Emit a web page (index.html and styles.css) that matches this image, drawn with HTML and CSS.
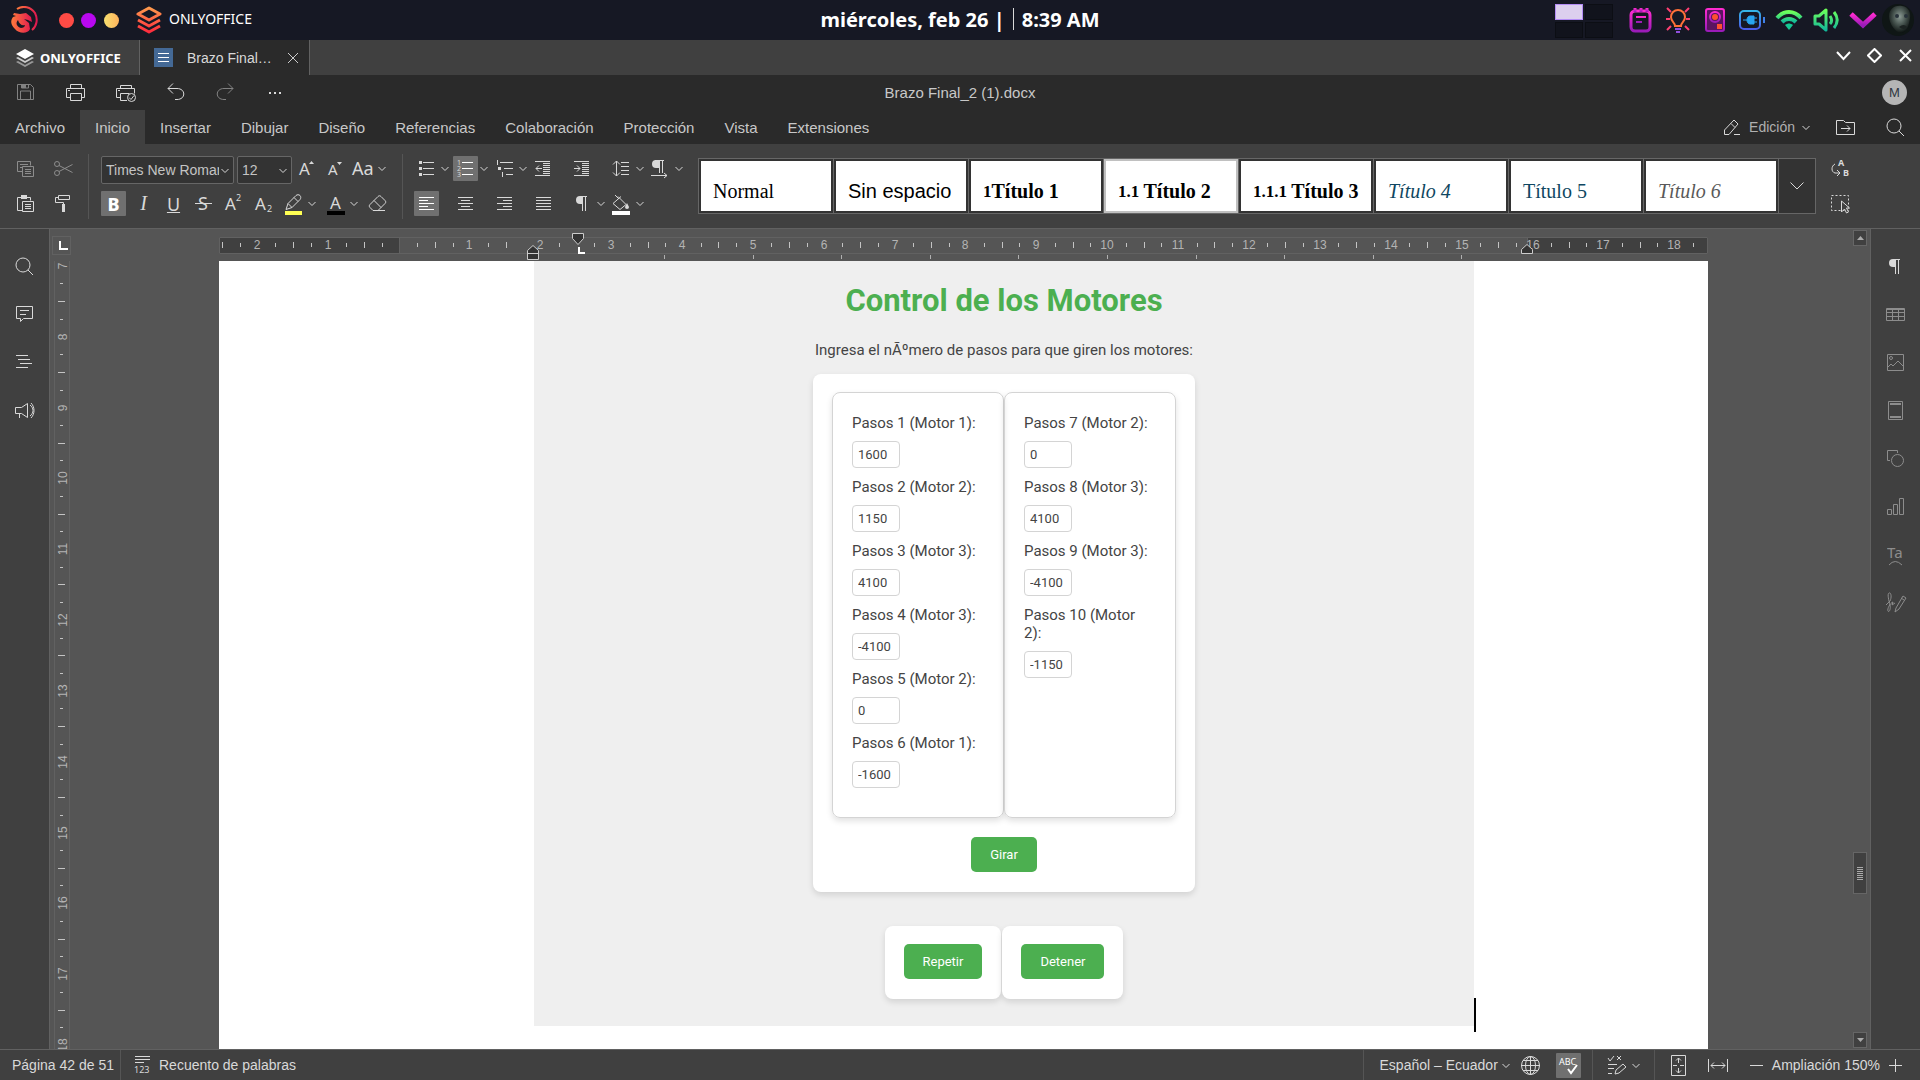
FILE: index.html
```html
<!DOCTYPE html>
<html lang="es">
<head>
<meta charset="utf-8">
<title>Brazo Final_2 (1).docx - ONLYOFFICE</title>
<link rel="stylesheet" href="styles.css">
</head>
<body>
<svg class="paints" aria-hidden="true">
  <defs>
    <linearGradient id="g-fire" x1="0" y1="0" x2="0" y2="1"><stop offset="0" stop-color="#ff9a4d"/><stop offset="1" stop-color="#ff2b3d"/></linearGradient>
    <linearGradient id="g-dragon" x1="0" y1="0" x2="1" y2="0"><stop offset="0" stop-color="#ff7a3c"/><stop offset="1" stop-color="#e0174f"/></linearGradient>
    <linearGradient id="g-pink" x1="0" y1="0" x2="0" y2="1"><stop offset="0" stop-color="#ff2bd0"/><stop offset="1" stop-color="#9a1bb8"/></linearGradient>
    <linearGradient id="g-blue" x1="0" y1="0" x2="0" y2="1"><stop offset="0" stop-color="#35b6e8"/><stop offset="1" stop-color="#4a5be8"/></linearGradient>
    <linearGradient id="g-green" x1="0" y1="0" x2="0" y2="1"><stop offset="0" stop-color="#6dff5a"/><stop offset="1" stop-color="#12b89a"/></linearGradient>
    <radialGradient id="g-face" cx=".5" cy=".4" r=".6"><stop offset="0" stop-color="#8b9a94"/><stop offset=".5" stop-color="#47544f"/><stop offset="1" stop-color="#0c1211"/></radialGradient>
  </defs>
</svg>
<svg class="sprite" aria-hidden="true">
  <symbol id="chev" viewBox="0 0 12 25"><path d="M2.500 11l3.500 3.500L9.500 11"/></symbol>
  <symbol id="copy" viewBox="0 0 25 25"><path d="M9 15.500H4.500v-10h13v4M7 8.500h8M7 11.500h2M9.500 10.500h11v10h-11zM12 13.500h6M12 15.500h6M12 17.500h6"/></symbol>
  <symbol id="cut" viewBox="0 0 25 25"><circle cx="6" cy="8" r="2.500"/><circle cx="6" cy="17" r="2.500"/><path d="M8 9.500l13.500 7M8 15.500l13.500-7"/></symbol>
  <symbol id="paste" viewBox="0 0 25 25"><path d="M9 19.500H4.500v-13h13v3M9.500 10.500h11v10h-11zM12 13.500h6M12 15.500h6M12 17.500h6"/><path class="solid" d="M8 4h6v4H8z"/></symbol>
  <symbol id="brush" viewBox="0 0 25 25"><path d="M7.500 4.500h11v4h-11zM7.500 6.500h-3v5h8v3"/><path class="solid" d="M11 13h3v8h-3z"/></symbol>
  <symbol id="up-a" viewBox="0 0 25 25"><text x="4" y="19" font-size="17">A</text><path class="solid" d="M14 8l2.500-3L19 8z"/></symbol>
  <symbol id="down-a" viewBox="0 0 25 25"><text x="5" y="19" font-size="15">A</text><path class="solid" d="M14 6l2.500 3L19 6z"/></symbol>
  <symbol id="case" viewBox="0 0 25 25"><text x="1" y="19" font-size="18">Aa</text></symbol>
  <symbol id="sup" viewBox="0 0 25 25"><text x="4" y="19" font-size="17">A</text><text x="15" y="10" font-size="9">2</text></symbol>
  <symbol id="sub" viewBox="0 0 25 25"><text x="4" y="19" font-size="17">A</text><text x="16" y="21" font-size="9">2</text></symbol>
  <symbol id="strike" viewBox="0 0 25 25"><text x="7" y="19" font-size="18">S</text><path d="M4 12.500h17"/></symbol>
  <symbol id="marker" viewBox="0 0 25 25"><path d="M5 18.500l2-6 8-8c1-1 3-1 4 0s1 3 0 4l-8 8zM7 12.500l4 4M13 6.500l4 4"/><path fill="#ffff54" stroke="none" d="M4 20h17v4H4z"/></symbol>
  <symbol id="color-a" viewBox="0 0 25 25"><text x="7" y="18" font-size="17">A</text><path fill="#000" stroke="none" d="M4 20h18v4H4z"/></symbol>
  <symbol id="eraser" viewBox="0 0 25 25"><path d="M8 19.500l-3-3c-1-1-1-2 0-3l8-8c1-1 2-1 3 0l4 4c1 1 1 2 0 3l-7 7zM9 9.500l7 7M13 19.500h7"/></symbol>
  <symbol id="bullets" viewBox="0 0 25 25"><path d="M9 6.500h11M9 12.500h11M9 18.500h11"/><path class="solid" d="M5 5h3v3H5zM5 11h3v3H5zM5 17h3v3H5z"/></symbol>
  <symbol id="numbers" viewBox="0 0 25 25"><path d="M9 6.500h11M9 12.500h11M9 18.500h11"/><text x="4" y="9" font-size="7">1</text><text x="4" y="15" font-size="7">2</text><text x="4" y="21" font-size="7">3</text></symbol>
  <symbol id="levels" viewBox="0 0 25 25"><path d="M8 6.500h13M12 12.500h9M14 18.500h7M5.500 4v5M10.500 16v5"/><path class="solid" d="M6 11h3v3H6z"/></symbol>
  <symbol id="outdent" viewBox="0 0 25 25"><path d="M4 5.500h15M12 7.500h7M12 9.500h7M12 11.500h7M12 13.500h7M12 15.500h7M12 17.500h7M4 19.500h15M11 12.500H5M8 9.500l-3 3 3 3"/></symbol>
  <symbol id="indent" viewBox="0 0 25 25"><path d="M4 5.500h15M12 7.500h7M12 9.500h7M12 11.500h7M12 13.500h7M12 15.500h7M12 17.500h7M4 19.500h15M4 12.500h6M7 9.500l3 3-3 3"/></symbol>
  <symbol id="spacing" viewBox="0 0 25 25"><path d="M12 6.500h8M12 10.500h8M12 14.500h8M12 18.500h8M7.500 5v15M4 8.500l3.500-3.500L11 8.500M4 16.500l3.500 3.500 3.500-3.500"/></symbol>
  <symbol id="pdir" viewBox="0 0 25 25"><path d="M11.500 4v13M14.500 4v13M7 4.500h9M3 19.500h16M16 17l3 2.500-3 2.500"/><path class="solid" d="M11 4H8a4 4 0 0 0 0 8h3z"/></symbol>
  <symbol id="pilcrow" viewBox="0 0 25 25"><path d="M12.500 5v15M15.500 5v15M10 5.500h7"/><path class="solid" d="M12 5h-2a4 4 0 0 0 0 8h2z"/></symbol>
  <symbol id="bucket" viewBox="0 0 25 25"><path d="M9 5.500l8 8-6 5-7-6 8-7M6 4l4 4"/><path class="solid" d="M18 12l2 4a2 2 0 1 1-4 0z"/><path fill="#fff" stroke="none" d="M3 20h18v4H3z"/></symbol>
  <symbol id="al" viewBox="0 0 25 25"><path d="M5 6.500h15M5 9.500h9M5 12.500h15M5 15.500h9M5 18.500h15"/></symbol>
  <symbol id="ac" viewBox="0 0 25 25"><path d="M5 6.500h15M8 9.500h9M5 12.500h15M8 15.500h9M5 18.500h15"/></symbol>
  <symbol id="ar" viewBox="0 0 25 25"><path d="M5 6.500h15M11 9.500h9M5 12.500h15M11 15.500h9M5 18.500h15"/></symbol>
  <symbol id="aj" viewBox="0 0 25 25"><path d="M5 6.500h15M5 9.500h15M5 12.500h15M5 15.500h15M5 18.500h15"/></symbol>
  <symbol id="replace" viewBox="0 0 25 25"><path d="M7 8c-4 2-4 8 0 9h5M9 14l3 3-3 3"/><text class="heavy" x="10" y="10" font-size="9">A</text><text class="heavy" x="15" y="20" font-size="9">B</text></symbol>
  <symbol id="select" viewBox="0 0 25 25"><path stroke-dasharray="2 2" d="M3.500 4.500h17v15h-17z"/><path fill="#404040" d="M13.500 10v11l3-3 2 4 2-1-2-4h3z"/></symbol>
  <symbol id="save" viewBox="0 0 25 25"><path d="M4.500 4.500h13l3 3v12h-16zM7.500 19v-8h10v8M8.500 4v4h7V4"/><path class="solid" d="M9 4h4v4H9z"/></symbol>
  <symbol id="print" viewBox="0 0 25 25"><path d="M7.500 8V4.500h11V8M7 17.500H3.500v-9h18v9H18M7.500 13.500h11v7h-11zM5 10.500h2"/></symbol>
  <symbol id="qprint" viewBox="0 0 25 25"><path d="M7.500 8V5.500h11V8M7 17.500H3.500v-9h18v5M14 20.500H7.500v-7h9M5 10.500h2"/><circle cx="18.500" cy="17.500" r="4"/><path d="M16 17.500l2 2 3-4"/></symbol>
  <symbol id="undo" viewBox="0 0 25 25"><path d="M10 3.500l-5 5 5 5M5 8.500h9c9 0 9 11 0 11h-2"/></symbol>
  <symbol id="redo" viewBox="0 0 25 25"><path d="M15 3.500l5 5-5 5M20 8.500h-9c-9 0-9 11 0 11h2"/></symbol>
  <symbol id="dots" viewBox="0 0 25 25"><path class="solid" d="M6 12h2v2H6zM11 12h2v2h-2zM16 12h2v2h-2z"/></symbol>
  <symbol id="pencil" viewBox="0 0 25 25"><path d="M5.500 15l9.500-10 4 4-9 10.500H5.500zM12 8.500l4 4M15 19.500h6"/></symbol>
  <symbol id="folder" viewBox="0 0 25 25"><path d="M3.500 19.500v-14h7l2 2h9v12zM8 13.500h9M14 10.500l3 3-3 3"/></symbol>
  <symbol id="search" viewBox="0 0 25 25"><circle cx="11" cy="11" r="7"/><path d="M16 16l5 5"/></symbol>
  <symbol id="comment" viewBox="0 0 25 25"><path d="M4.500 4.500h16v12h-9l-3 3v-3h-4zM8 8.500h9M8 12.500h6"/></symbol>
  <symbol id="outline" viewBox="0 0 25 25"><path d="M4 5.500h12M6 9.500h12M8 13.500h12M4 17.500h12"/></symbol>
  <symbol id="horn" viewBox="0 0 25 25"><path d="M3.500 9.500h6l6-4v14l-6-4h-6zM7.500 16v4M18 7c4 3 4 8 0 11M19 5c4 4 4 11 0 15"/></symbol>
  <symbol id="table" viewBox="0 0 25 25"><path d="M3.500 6.500h18v12h-18zM3 7.500h18M3 10.500h18M3 14.500h18M9.500 6v12M15.500 6v12"/></symbol>
  <symbol id="image" viewBox="0 0 25 25"><path d="M4.500 4.500h16v16h-16zM5 17l3-3 2 2 5-5 5 5"/><circle cx="8" cy="8" r="1.500"/></symbol>
  <symbol id="header" viewBox="0 0 25 25"><path d="M5.500 3.500h14v18h-14zM7 5.500h11M7 6.500h11M7 18.500h11M7 19.500h11"/></symbol>
  <symbol id="shape" viewBox="0 0 25 25"><path d="M7 14.500H4.500v-10h10V7"/><circle cx="14.500" cy="14.500" r="6"/></symbol>
  <symbol id="chart" viewBox="0 0 25 25"><path d="M4.500 15.500h4v5h-4zM10.500 10.500h4v10h-4zM16.500 4.500h4v16h-4z"/></symbol>
  <symbol id="textart" viewBox="0 0 25 25"><text x="4" y="16" font-size="15">Ta</text><path d="M6 23q6-7 13 0"/></symbol>
  <symbol id="sign" viewBox="0 0 25 25"><path d="M3 15l4-4c2-4 1-9-1-8s0 8 1 12-1 8-2 6 2-8 5-9l-1 3 3-2M12 22l1-4 7-12 3 2-7 11zM18 8l3 2"/></symbol>
  <symbol id="globe" viewBox="0 0 25 25"><circle cx="12.500" cy="12.500" r="9"/><ellipse cx="12.500" cy="12.500" rx="5" ry="9"/><path d="M12.500 3v19M3 12.500h19M5 7.500h15M5 17.500h15"/></symbol>
  <symbol id="spell" viewBox="0 0 25 25"><text class="bright" x="3" y="12" font-size="9">ABC</text><path class="thick" d="M12 16l3 4 6-8"/></symbol>
  <symbol id="review" viewBox="0 0 25 25"><path d="M3 5l2 3 4-5M12 3l4 4M16 3l-4 4M3 11.500h9M3 15.500h6M3 20.500h4M10 21l1-4 7-6 3 3-7 6z"/></symbol>
  <symbol id="fitpage" viewBox="0 0 25 25"><path d="M5.500 2.500h14v20h-14zM12.500 5v5M10 7.500l2.500-2.500L15 7.500M12.500 20v-5M10 17.500l2.500 2.500 2.500-2.500M7 12.500h4M14 12.500h4"/></symbol>
  <symbol id="fitwidth" viewBox="0 0 25 25"><path d="M3.500 6v13M22.500 6v13M6 12.500h14M9 9.500l-3 3 3 3M17 9.500l3 3-3 3"/></symbol>
  <symbol id="minus" viewBox="0 0 25 25"><path d="M6 12.500h13"/></symbol>
  <symbol id="plus" viewBox="0 0 25 25"><path d="M6 12.500h13M12.500 6v13"/></symbol>
  <symbol id="count" viewBox="0 0 25 25"><path d="M5 3.500h15M5 6.500h15M5 9.500h9"/><text x="4" y="20" font-size="9">123</text></symbol>
</svg>

<header class="desk">
  <div class="desk-left">
    <svg class="dragon" viewBox="0 0 28 28"><path d="M7 3C13-1 21 1 25 7c3 6 2 13-3 17" fill="none" stroke="url(#g-dragon)" stroke-width="2"/><path fill="url(#g-dragon)" d="M4 7l6 1 6-1 5 4 1 5-4-2-4-1 5 4 1 6c-2 5-11 5-15 0-4-4-5-8-2-12l3-1-3-1zM8 14c-3 3-1 7 3 8 2 0 4-1 4-3-3 1-6-1-7-5z" fill-rule="evenodd"/></svg>
    <span class="dot dot-red"></span><span class="dot dot-violet"></span><span class="dot dot-gold"></span>
    <svg class="oo-color" viewBox="0 0 26 28"><path fill="none" stroke="url(#g-fire)" stroke-width="3" stroke-linejoin="round" d="M2 8l11-6 11 6-11 6zM2 14l11 6 11-6M2 20l11 6 11-6"/></svg>
    <span class="app-name">ONLYOFFICE</span>
  </div>
  <div class="clock"><span>miércoles, feb 26 |</span><i></i><span>8:39 AM</span></div>
  <div class="desk-right">
    <div class="pager"><span class="on"></span><span></span><span></span><span></span></div>
    <svg class="tray" viewBox="0 0 28 28" fill="none" stroke="url(#g-pink)" stroke-width="3"><rect x="4" y="5" width="19" height="20" rx="4"/><path d="M8 2v4M14 2v4M20 2v4"/><path stroke-width="2" d="M9 11h10M9 16h6"/></svg>
    <svg class="tray" viewBox="0 0 28 28" fill="none" stroke="#ff3f73" stroke-width="2"><path d="M3 2l4 4M25 2l-4 4M2 13h4M22 13h4M3 24l4-4M25 24l-4-4"/><path stroke="#ff7038" d="M11 20c0-4-4-4-4-9a7 7 0 0 1 14 0c0 5-4 5-4 9z"/><path stroke="#9050e0" d="M11 23h6M12 26h4"/></svg>
    <svg class="tray" viewBox="0 0 28 28" fill="#5a1460" stroke="url(#g-pink)" stroke-width="2"><rect x="5" y="3" width="18" height="22" rx="2"/><circle cx="14" cy="11" r="5"/><circle cx="14" cy="11" r="2" fill="#ff5030" stroke="#ff5030"/><path fill="#ff5030" stroke="none" d="M16 18h5v5h-5z"/><path d="M8 20h3"/></svg>
    <svg class="tray" viewBox="0 0 28 28" fill="none" stroke="url(#g-blue)" stroke-width="2"><rect x="2" y="5" width="20" height="18" rx="4"/><path stroke="#3f7fe8" d="M26 11v6"/><path fill="#28a5f0" stroke="#28a5f0" stroke-width="1" d="M12 10h4v8h-4c-2 0-3-2-3-4s1-4 3-4zM5 14h4M16 12h3M16 16h3"/></svg>
    <svg class="tray" viewBox="0 0 28 28" fill="none" stroke="url(#g-green)" stroke-width="4"><path d="M2 12c7-8 17-8 24 0M7 16c4-4 10-4 14 0"/><path fill="#16c794" stroke="none" d="M10 19c3-2 5-2 8 0l-4 5z"/></svg>
    <svg class="tray" viewBox="0 0 28 28" fill="none" stroke="url(#g-green)" stroke-width="3" stroke-linejoin="round"><path d="M3 10h4l7-6v20l-7-6H3zM18 10c2 3 2 6 0 8M22 6c4 5 4 11 0 16"/></svg>
    <svg class="tray" viewBox="0 0 28 28" fill="none" stroke="url(#g-pink)" stroke-width="5"><path d="M2 8l12 11L26 8"/></svg>
    <svg class="face" viewBox="0 0 32 32"><circle cx="16" cy="16" r="16" fill="#0f1615"/><path fill="url(#g-face)" d="M7 12C7 4 14 1 20 2c7 1 9 7 8 12-1 7-3 15-9 15-5 0-12-9-12-17z"/><circle cx="15" cy="12" r="2" fill="#27323a"/><circle cx="24" cy="12" r="2" fill="#27323a"/><path fill="#1b2221" d="M17 23q5-4 8 0-3 4-8 0z"/></svg>
  </div>
</header>

<nav class="tabstrip">
  <button class="home-tab"><svg viewBox="0 0 20 20"><path fill="#fff" d="M1 6l9-5 9 5-9 5z"/><path fill="#ccc" d="M1 10l2-1 7 4 7-4 2 1-9 5z"/><path fill="#999" d="M1 14l2-1 7 4 7-4 2 1-9 5z"/></svg>ONLYOFFICE</button>
  <div class="doc-tab"><svg class="doc-ico" viewBox="0 0 19 19"><path fill="#446995" d="M0 0h19v19H0z"/><path stroke="#fff" d="M4 5.500h11M4 9.500h11M4 13.500h11"/></svg><span>Brazo Final…</span><button aria-label="Cerrar pestaña"><svg viewBox="0 0 12 12"><path d="M1 1l10 10M11 1L1 11"/></svg></button></div>
  <div class="win">
    <button aria-label="Minimizar"><svg viewBox="0 0 15 15"><path d="M1 4l6.500 7L14 4"/></svg></button>
    <button aria-label="Maximizar"><svg viewBox="0 0 15 15"><path d="M7.500 1L14 7.500 7.500 14 1 7.500z"/></svg></button>
    <button aria-label="Cerrar"><svg viewBox="0 0 15 15"><path d="M2 2l11 11M13 2L2 13"/></svg></button>
  </div>
</nav>

<div class="titlebar">
  <div class="quick">
    <button class="off" aria-label="Guardar"><svg class="ic"><use href="#save"/></svg></button>
    <button aria-label="Imprimir"><svg class="ic"><use href="#print"/></svg></button>
    <button aria-label="Impresión rápida"><svg class="ic"><use href="#qprint"/></svg></button>
    <button aria-label="Deshacer"><svg class="ic"><use href="#undo"/></svg></button>
    <button class="off" aria-label="Rehacer"><svg class="ic"><use href="#redo"/></svg></button>
    <button aria-label="Más"><svg class="ic"><use href="#dots"/></svg></button>
  </div>
  <div class="doc-name">Brazo Final_2 (1).docx</div>
  <div class="user"><span>M</span></div>
</div>

<nav class="menu">
  <button>Archivo</button><button class="active">Inicio</button><button>Insertar</button><button>Dibujar</button><button>Diseño</button><button>Referencias</button><button>Colaboración</button><button>Protección</button><button>Vista</button><button>Extensiones</button>
  <div class="menu-right">
    <button class="mode"><svg class="ic"><use href="#pencil"/></svg><span>Edición</span><svg class="cv"><use href="#chev"/></svg></button>
    <button aria-label="Abrir ubicación"><svg class="ic"><use href="#folder"/></svg></button>
    <button aria-label="Buscar"><svg class="ic"><use href="#search"/></svg></button>
  </div>
</nav>

<section class="ribbon">
  <div class="group clip">
    <div class="row"><button class="off" aria-label="Copiar"><svg class="ic"><use href="#copy"/></svg></button><button class="off" aria-label="Cortar"><svg class="ic"><use href="#cut"/></svg></button></div>
    <div class="row"><button aria-label="Pegar"><svg class="ic"><use href="#paste"/></svg></button><button aria-label="Copiar estilo"><svg class="ic"><use href="#brush"/></svg></button></div>
  </div>
  <div class="sep"></div>
  <div class="group font">
    <div class="row">
      <div class="combo name"><select aria-label="Fuente"><option>Times New Roman</option></select><svg class="cv"><use href="#chev"/></svg></div>
      <div class="combo size"><select aria-label="Tamaño de fuente"><option>12</option></select><svg class="cv"><use href="#chev"/></svg></div>
      <button aria-label="Aumentar tamaño"><svg class="ic"><use href="#up-a"/></svg></button>
      <button aria-label="Reducir tamaño"><svg class="ic"><use href="#down-a"/></svg></button>
      <button aria-label="Cambiar mayúsculas"><svg class="ic"><use href="#case"/></svg><svg class="cv"><use href="#chev"/></svg></button>
    </div>
    <div class="row wide">
      <button class="pressed bold">B</button>
      <button class="ital">I</button>
      <button class="under">U</button>
      <button aria-label="Tachado"><svg class="ic"><use href="#strike"/></svg></button>
      <button aria-label="Superíndice"><svg class="ic"><use href="#sup"/></svg></button>
      <button aria-label="Subíndice"><svg class="ic"><use href="#sub"/></svg></button>
      <button aria-label="Resaltado"><svg class="ic"><use href="#marker"/></svg><svg class="cv"><use href="#chev"/></svg></button>
      <button aria-label="Color de fuente"><svg class="ic"><use href="#color-a"/></svg><svg class="cv"><use href="#chev"/></svg></button>
      <button aria-label="Borrar estilo"><svg class="ic"><use href="#eraser"/></svg></button>
    </div>
  </div>
  <div class="sep"></div>
  <div class="group para">
    <button aria-label="Viñetas"><svg class="ic"><use href="#bullets"/></svg><svg class="cv"><use href="#chev"/></svg></button>
    <button aria-label="Numeración"><svg class="ic pressed"><use href="#numbers"/></svg><svg class="cv"><use href="#chev"/></svg></button>
    <button aria-label="Lista multinivel"><svg class="ic"><use href="#levels"/></svg><svg class="cv"><use href="#chev"/></svg></button>
    <button aria-label="Reducir sangría"><svg class="ic"><use href="#outdent"/></svg></button>
    <button aria-label="Aumentar sangría"><svg class="ic"><use href="#indent"/></svg></button>
    <button aria-label="Interlineado"><svg class="ic"><use href="#spacing"/></svg><svg class="cv"><use href="#chev"/></svg></button>
    <button aria-label="Dirección del texto"><svg class="ic"><use href="#pdir"/></svg><svg class="cv"><use href="#chev"/></svg></button>
    <button aria-label="Alinear a la izquierda"><svg class="ic pressed"><use href="#al"/></svg></button>
    <button aria-label="Centrar"><svg class="ic"><use href="#ac"/></svg></button>
    <button aria-label="Alinear a la derecha"><svg class="ic"><use href="#ar"/></svg></button>
    <button aria-label="Justificar"><svg class="ic"><use href="#aj"/></svg></button>
    <button aria-label="Caracteres no imprimibles"><svg class="ic"><use href="#pilcrow"/></svg><svg class="cv"><use href="#chev"/></svg></button>
    <button aria-label="Sombreado"><svg class="ic"><use href="#bucket"/></svg><svg class="cv"><use href="#chev"/></svg></button>
  </div>
  <div class="gallery">
    <button class="st serif">Normal</button>
    <button class="st">Sin espacio</button>
    <button class="st serif strong"><small>1</small>Título 1</button>
    <button class="st serif strong chosen"><small>1.1 </small>Título 2</button>
    <button class="st serif strong"><small>1.1.1 </small>Título 3</button>
    <button class="st serif slant teal">Título 4</button>
    <button class="st serif teal">Título 5</button>
    <button class="st serif slant gray">Título 6</button>
    <button class="more" aria-label="Más estilos"><svg viewBox="0 0 16 10"><path d="M1.500 1.500L8 8l6.500-6.500"/></svg></button>
  </div>
  <div class="group tail">
    <button aria-label="Reemplazar"><svg class="ic"><use href="#replace"/></svg></button>
    <button aria-label="Seleccionar"><svg class="ic"><use href="#select"/></svg></button>
  </div>
</section>

<main class="work">
  <aside class="side left">
    <button aria-label="Buscar"><svg class="ic"><use href="#search"/></svg></button>
    <button aria-label="Comentarios"><svg class="ic"><use href="#comment"/></svg></button>
    <button aria-label="Títulos"><svg class="ic"><use href="#outline"/></svg></button>
    <button aria-label="Sugerencias"><svg class="ic"><use href="#horn"/></svg></button>
  </aside>
  <div class="vcol">
    <button class="tabstop" aria-label="Tabulación"></button>
    <svg class="vruler" width="17" height="788" viewBox="0 0 17 788">
      <path stroke="#616161" d="M.5 0v788M15.500 0v788"/>
      <path stroke="#c4c4c4" d="M4 40.500h7M4 111.500h7M4 182.500h7M4 253.500h7M4 323.500h7M4 394.500h7M4 465.500h7M4 536.500h7M4 607.500h7M4 678.500h7M4 749.500h7M6 22.500h3M6 58.500h3M6 93.500h3M6 129.500h3M6 164.500h3M6 199.500h3M6 235.500h3M6 270.500h3M6 306.500h3M6 341.500h3M6 377.500h3M6 412.500h3M6 447.500h3M6 483.500h3M6 518.500h3M6 554.500h3M6 589.500h3M6 624.500h3M6 660.500h3M6 695.500h3M6 731.500h3M6 766.500h3"/>
      <g class="nums">
        <text transform="translate(13 5) rotate(-90)">7</text><text transform="translate(13 76) rotate(-90)">8</text><text transform="translate(13 147) rotate(-90)">9</text><text transform="translate(13 217) rotate(-90)">10</text><text transform="translate(13 288) rotate(-90)">11</text><text transform="translate(13 359) rotate(-90)">12</text><text transform="translate(13 430) rotate(-90)">13</text><text transform="translate(13 501) rotate(-90)">14</text><text transform="translate(13 572) rotate(-90)">15</text><text transform="translate(13 642) rotate(-90)">16</text><text transform="translate(13 713) rotate(-90)">17</text><text transform="translate(13 784) rotate(-90)">18</text>
      </g>
    </svg>
  </div>
  <div class="canvas">
    <svg class="hruler" width="1489" height="32" viewBox="0 0 1489 32">
      <path fill="#404040" d="M0 8h181v17H0zM1309 8h180v17h-180z"/>
      <path fill="none" stroke="#616161" d="M.5 8.500h1488v16H.5zM180.500 8v17M1308.500 8v17"/>
      <path stroke="#c4c4c4" d="M3.500 13v6M74.500 13v6M145.500 13v6M216.500 13v6M287.500 13v6M429.500 13v6M499.500 13v6M570.500 13v6M641.500 13v6M712.500 13v6M783.500 13v6M854.500 13v6M925.500 13v6M995.500 13v6M1066.500 13v6M1137.500 13v6M1208.500 13v6M1279.500 13v6M1350.500 13v6M1421.500 13v6M21.500 14v4M56.500 14v4M92.500 14v4M127.500 14v4M163.500 14v4M198.500 14v4M234.500 14v4M269.500 14v4M340.500 14v4M375.500 14v4M411.500 14v4M446.500 14v4M482.500 14v4M517.500 14v4M552.500 14v4M588.500 14v4M623.500 14v4M659.500 14v4M694.500 14v4M730.500 14v4M765.500 14v4M800.500 14v4M836.500 14v4M871.500 14v4M907.500 14v4M942.500 14v4M978.500 14v4M1013.500 14v4M1048.500 14v4M1084.500 14v4M1119.500 14v4M1155.500 14v4M1190.500 14v4M1226.500 14v4M1261.500 14v4M1297.500 14v4M1332.500 14v4M1367.500 14v4M1403.500 14v4M1438.500 14v4M1474.500 14v4"/>
      <path stroke="#b0b0b0" d="M445.500 26v4M534.500 26v4M622.500 26v4M711.500 26v4M799.500 26v4M888.500 26v4M977.500 26v4M1065.500 26v4M1154.500 26v4M1242.500 26v4"/>
      <g class="nums">
        <text x="38" y="20">2</text><text x="109" y="20">1</text><text x="250" y="20">1</text><text x="321" y="20">2</text><text x="392" y="20">3</text><text x="463" y="20">4</text><text x="534" y="20">5</text><text x="605" y="20">6</text><text x="676" y="20">7</text><text x="746" y="20">8</text><text x="817" y="20">9</text><text x="888" y="20">10</text><text x="959" y="20">11</text><text x="1030" y="20">12</text><text x="1101" y="20">13</text><text x="1172" y="20">14</text><text x="1243" y="20">15</text><text x="1314" y="20">16</text><text x="1384" y="20">17</text><text x="1455" y="20">18</text>
      </g>
      <path fill="#333" stroke="#ccc" d="M308.500 30.500v-9l5.500-5 5.500 5v9zM308.500 24.500h11M353.500 4.500h11v5l-5.500 6-5.500-6zM1302.500 24.500v-4l5.500-5 5.500 5v4z"/>
      <path fill="none" stroke="#fff" stroke-width="2" d="M360 18v6h6"/>
    </svg>
    <article class="page">
      <section class="shot">
        <h1>Control de los Motores</h1>
        <p>Ingresa el nÃºmero de pasos para que giren los motores:</p>
        <form class="card">
          <div class="cols">
            <div class="col">
              <label for="p1">Pasos 1 (Motor 1):</label><input id="p1" value="1600">
              <label for="p2">Pasos 2 (Motor 2):</label><input id="p2" value="1150">
              <label for="p3">Pasos 3 (Motor 3):</label><input id="p3" value="4100">
              <label for="p4">Pasos 4 (Motor 3):</label><input id="p4" value="-4100">
              <label for="p5">Pasos 5 (Motor 2):</label><input id="p5" value="0">
              <label for="p6">Pasos 6 (Motor 1):</label><input id="p6" value="-1600">
            </div>
            <div class="col">
              <label for="p7">Pasos 7 (Motor 2):</label><input id="p7" value="0">
              <label for="p8">Pasos 8 (Motor 3):</label><input id="p8" value="4100">
              <label for="p9">Pasos 9 (Motor 3):</label><input id="p9" value="-4100">
              <label for="p10">Pasos 10 (Motor 2):</label><input id="p10" value="-1150">
            </div>
          </div>
          <button type="button" class="go">Girar</button>
        </form>
        <div class="pair">
          <div class="card"><button class="go">Repetir</button></div>
          <div class="card"><button class="go">Detener</button></div>
        </div>
      </section>
      <span class="caret"></span>
    </article>
  </div>
  <div class="scroll">
    <button aria-label="Subir"><svg viewBox="0 0 7 4"><path d="M0 4l3.500-4L7 4z"/></svg></button>
    <div class="track"><div class="thumb"></div></div>
    <button aria-label="Bajar"><svg viewBox="0 0 7 4"><path d="M0 0l3.500 4L7 0z"/></svg></button>
  </div>
  <aside class="side right">
    <button aria-label="Párrafo"><svg class="ic"><use href="#pilcrow"/></svg></button>
    <button class="off" aria-label="Tabla"><svg class="ic"><use href="#table"/></svg></button>
    <button class="off" aria-label="Imagen"><svg class="ic"><use href="#image"/></svg></button>
    <button class="off" aria-label="Encabezado"><svg class="ic"><use href="#header"/></svg></button>
    <button class="off" aria-label="Forma"><svg class="ic"><use href="#shape"/></svg></button>
    <button class="off" aria-label="Gráfico"><svg class="ic"><use href="#chart"/></svg></button>
    <button class="off" aria-label="Arte de texto"><svg class="ic"><use href="#textart"/></svg></button>
    <button class="off" aria-label="Firma"><svg class="ic"><use href="#sign"/></svg></button>
  </aside>
</main>

<footer class="status">
  <button class="pages">Página 42 de 51</button>
  <button class="words"><svg class="ic"><use href="#count"/></svg>Recuento de palabras</button>
  <div class="status-right">
    <div class="cell lang"><button>Español – Ecuador<svg class="cv"><use href="#chev"/></svg></button><button aria-label="Idioma del documento"><svg class="ic"><use href="#globe"/></svg></button><button aria-label="Ortografía"><svg class="ic pressed"><use href="#spell"/></svg></button></div>
    <div class="cell"><button aria-label="Control de cambios"><svg class="ic"><use href="#review"/></svg><svg class="cv"><use href="#chev"/></svg></button></div>
    <div class="cell zoom"><button aria-label="Ajustar a la página"><svg class="ic"><use href="#fitpage"/></svg></button><button aria-label="Ajustar al ancho"><svg class="ic"><use href="#fitwidth"/></svg></button><button aria-label="Alejar"><svg class="ic"><use href="#minus"/></svg></button><button class="pct">Ampliación 150%</button><button aria-label="Acercar"><svg class="ic"><use href="#plus"/></svg></button></div>
  </div>
</footer>
</body>
</html>
```
FILE: styles.css
```css
* { box-sizing: border-box; }

body {
  margin: 0;
  height: 100vh;
  display: grid;
  grid-template-rows: 40px 35px 35px 34px 85px minmax(0, 1fr) 31px;
  grid-template-columns: minmax(0, 1fr);
  overflow: hidden;
  background: #404040;
  color: #d9d9d9;
  font-family: "Liberation Sans", Arial, sans-serif;
  font-size: 14px;
}

button {
  display: inline-flex;
  align-items: center;
  padding: 0;
  border: 0;
  background: none;
  color: inherit;
  font: inherit;
  white-space: nowrap;
}

.paints { position: absolute; width: 0; height: 0; }
.sprite { display: none; }

.ic, .cv {
  flex: none;
  width: 25px;
  height: 25px;
  fill: none;
  stroke: #d9d9d9;
  stroke-width: 1;
}
.cv { width: 12px; }
symbol text, symbol .solid { fill: #d9d9d9; stroke: none; }
symbol text { font-family: "Noto Sans", sans-serif; font-weight: 400; }
symbol .heavy { font-weight: 700; }
symbol .bright { fill: #fff; }
symbol .thick { stroke-width: 2; }
.off { opacity: .5; }
.pressed { background: #707070; border-radius: 1px; stroke: #fff; }

/* desktop panel */
.desk {
  display: grid;
  grid-template-columns: 1fr auto 1fr;
  align-items: center;
  background: #161824;
  color: #fff;
}
.desk-left { display: flex; align-items: center; padding-left: 10px; }
.dragon { width: 28px; height: 28px; margin-right: 21px; }
.dot { width: 15px; height: 15px; border-radius: 50%; margin-right: 7px; }
.dot-red { background: #ff4b45; }
.dot-violet { background: #b908f0; margin-right: 8px; }
.dot-gold { background: linear-gradient(90deg, #f8e070, #ffb35c); margin-right: 17px; }
.oo-color { width: 26px; height: 28px; margin-right: 7px; }
.app-name { font-family: "Noto Sans", sans-serif; font-size: 14px; line-height: 20px; padding-bottom: 2px; }
.clock {
  display: flex;
  align-items: center;
  gap: 8px;
  padding-bottom: 2px;
  font: 700 20px "Noto Sans", sans-serif;
}
.clock i { width: 1px; height: 22px; background: #d9d9d9; }
.desk-right { display: flex; align-items: center; justify-content: flex-end; gap: 9px; padding-right: 6px; }
.pager { display: grid; grid-template-columns: 28px 28px; gap: 2px; margin-right: 5px; align-self: start; padding-top: 2px; }
.pager span { height: 16px; background: #11131c; border: 1px solid #0c0e14; }
.pager .on { background: #dccfee; border-color: #b48cf5; }
.tray { width: 28px; height: 28px; }
.face { width: 32px; height: 32px; }
.desk-right .face { margin-left: -4px; }

/* document tabs */
.tabstrip { display: flex; background: #404040; }
.home-tab {
  width: 140px;
  padding-left: 15px;
  gap: 5px;
  border-right: 1px solid #616161;
  color: #fff;
  font: 700 13px "Noto Sans", sans-serif;
}
.home-tab svg { width: 20px; height: 20px; }
.doc-tab {
  width: 170px;
  display: flex;
  align-items: center;
  padding: 0 10px 0 14px;
  background: #2a2a2a;
  border-right: 1px solid #616161;
}
.doc-ico { width: 19px; height: 19px; margin-right: 14px; }
.doc-tab span { flex: 1; }
.doc-tab button svg { width: 12px; height: 12px; stroke: #ccc; }
.win { display: flex; margin-left: auto; gap: 16px; padding: 0 7px 4px 0; }
.win svg { width: 15px; height: 15px; fill: none; stroke: #fff; stroke-width: 2; }

/* title row */
.titlebar {
  display: grid;
  grid-template-columns: 1fr auto 1fr;
  align-items: center;
  background: #2a2a2a;
  font-size: 15px;
  color: #c8c8c8;
}
.quick { display: flex; gap: 25px; padding-left: 13px; }
.user { display: flex; justify-content: flex-end; padding-right: 13px; }
.user span {
  width: 25px;
  height: 25px;
  border-radius: 50%;
  background: #b5b5b5;
  color: #2f3540;
  font-size: 13px;
  line-height: 25px;
  text-align: center;
}

/* menu row */
.menu { display: flex; background: #2a2a2a; color: #c8c8c8; font-size: 15px; }
.menu > button { padding: 0 15px; }
.menu .active { background: #404040; }
.menu-right { display: flex; align-items: center; gap: 25px; margin-left: auto; padding-right: 12px; }
.mode { font-size: 14px; color: #b0b0b0; margin-right: -4px; }
.mode span { margin: 0 5px 0 5px; }

/* ribbon */
.ribbon {
  display: flex;
  align-items: flex-start;
  padding: 12px 67px 0 13px;
  background: #404040;
  border-bottom: 1px solid #616161;
}
.group { display: grid; grid-template-rows: 28px 25px; row-gap: 7px; align-items: start; }
.row { display: flex; align-items: flex-start; gap: 3px; }
.row.wide { gap: 5px; }
.clip .row { gap: 13px; }
.sep { width: 1px; height: 65px; margin: -2px 12px 0; background: #555; }
.combo { position: relative; height: 28px; }
.combo select {
  appearance: none;
  width: 100%;
  height: 28px;
  padding: 0 14px 0 4px;
  border: 1px solid #666;
  border-radius: 2px;
  background: #333;
  color: #c4c4c4;
  font: 14px "Liberation Sans", Arial, sans-serif;
  overflow: hidden;
}
.combo .cv { position: absolute; right: 3px; top: 2px; pointer-events: none; }
.combo.name { width: 133px; }
.combo.size { width: 55px; }
.bold, .ital, .under { width: 25px; height: 25px; justify-content: center; font: 18px "Noto Sans", sans-serif; }
.bold { font-weight: 800; color: #fff; }
.ital { font: italic 20px "Liberation Serif", serif; }
.under { text-decoration: underline; text-decoration-thickness: 1px; }
.para { grid-template-columns: repeat(7, 37px); column-gap: 2px; margin-left: -1px; }
.gallery {
  flex: 1;
  display: flex;
  height: 56px;
  margin: 2px 12px 0 13px;
  border: 1px solid #666;
  background: #333;
}
.st {
  flex: 1 1 0;
  min-width: 0;
  align-items: flex-start;
  padding: 18px 0 0 12px;
  border: 2px solid #333;
  background: #fff;
  box-shadow: 1px 0 #666;
  margin-right: 1px;
  color: #000;
  font-size: 20px;
  line-height: 24px;
  white-space: pre;
  overflow: hidden;
}
.st small { font-size: 17px; line-height: 25px; }
.serif { font-family: "Liberation Serif", "Times New Roman", serif; }
.strong { font-weight: 700; }
.slant { font-style: italic; }
.teal { color: #0f4761; }
.gray { color: #595959; }
.chosen { border-color: #c0c0c0; }
.more { width: 36px; justify-content: center; }
.more svg { width: 16px; height: 10px; fill: none; stroke: #d9d9d9; }

/* work area */
.work { display: grid; grid-template-columns: 50px 24px minmax(0, 1fr) 17px 50px; background: #555; min-height: 0; }
.side { display: grid; justify-items: center; background: #404040; padding-top: 13px; align-content: start; }
.side.left { grid-auto-rows: 48px; border-right: 1px solid #616161; }
.side.right { border-left: 1px solid #616161; grid-template-rows: repeat(8, 48px); }
.vcol { display: flex; flex-direction: column; padding: 7px 0 0 2px; overflow: hidden; }
.tabstop { flex: none; width: 19px; height: 19px; margin-bottom: 6px; border: 1px solid #616161; }
.tabstop::before { content: ""; width: 7px; height: 7px; margin: 0 0 0 6px; border-left: 2px solid #fff; border-bottom: 2px solid #fff; }
.vruler { flex: none; margin-left: 2px; }
.nums text { font: 12px "Liberation Sans", Arial, sans-serif; fill: #b4b4b4; text-anchor: middle; }
.canvas { display: flex; flex-direction: column; align-items: center; overflow: hidden; }
.hruler { flex: none; }
.page {
  flex: 1;
  width: 1489px;
  display: flex;
  align-items: flex-start;
  padding-left: 315px;
  background: #fff;
}
.caret { width: 2px; height: 34px; margin-top: 737px; background: #000; }

/* pasted web page */
.shot {
  width: 940px;
  padding: 22px 0 27px;
  display: flex;
  flex-direction: column;
  align-items: center;
  background: #efefef;
  color: #444;
  font-family: Roboto, sans-serif;
}
.shot h1 { margin: 0 0 22px; font-size: 31px; line-height: 36px; color: #4caf50; }
.shot p { margin: 0 0 15px; font-size: 15px; line-height: 18px; }
.card {
  display: flex;
  flex-direction: column;
  align-items: center;
  padding: 18px 19px 20px;
  background: #fff;
  border-radius: 8px;
  box-shadow: 0 3px 6px #0000001f;
}
form.card { width: 382px; }
.cols { display: flex; align-self: stretch; margin-bottom: 19px; }
.col {
  flex: 1;
  display: flex;
  flex-direction: column;
  align-items: flex-start;
  padding: 21px 20px 19px 19px;
  border: 1px solid #d4d4d4;
  border-radius: 8px;
  box-shadow: 0 3px 6px #0000001f;
}
.col label { margin-bottom: 9px; font-size: 15px; line-height: 18px; }
.col input {
  width: 48px;
  height: 27px;
  margin-bottom: 10px;
  padding: 0 5px;
  border: 1px solid #d4d4d4;
  border-radius: 4px;
  background: #fff;
  color: #444;
  font: 13px Roboto, sans-serif;
}
.go { height: 35px; padding: 0 19px; border-radius: 5px; background: #4caf50; color: #fff; font: 13px Roboto, sans-serif; }
.pair { display: flex; gap: 1px; margin-top: 34px; }

/* scrollbar */
.scroll { display: flex; flex-direction: column; padding: 1px 3px 1px 0; }
.scroll button { width: 14px; height: 16px; justify-content: center; border: 1px solid #666; background: #404040; }
.scroll button svg { width: 7px; height: 4px; fill: #aaa; }
.track { flex: 1; display: flex; flex-direction: column; justify-content: flex-end; padding-bottom: 138px; }
.thumb {
  height: 42px;
  border: 1px solid #666;
  background: repeating-linear-gradient(#aaa 0 1px, #404040 1px 2px) center / 6px 13px no-repeat #404040;
}

/* status bar */
.status { display: flex; background: #404040; border-top: 1px solid #616161; }
.pages { width: 121px; padding-left: 12px; border-right: 1px solid #555; }
.words { padding-left: 9px; gap: 4px; }
.status-right { display: flex; margin-left: auto; padding-right: 12px; }
.cell { display: flex; align-items: center; border-left: 1px solid #555; padding: 0 12px; }
.lang { padding: 0 11px 0 16px; gap: 6px; }
.lang button:first-child { gap: 2px; }
.lang button:last-child { margin-left: 7px; }
.zoom { padding: 0 0 0 11px; gap: 3px; }
.zoom button:nth-child(2) { margin: 0 11px; }
```
